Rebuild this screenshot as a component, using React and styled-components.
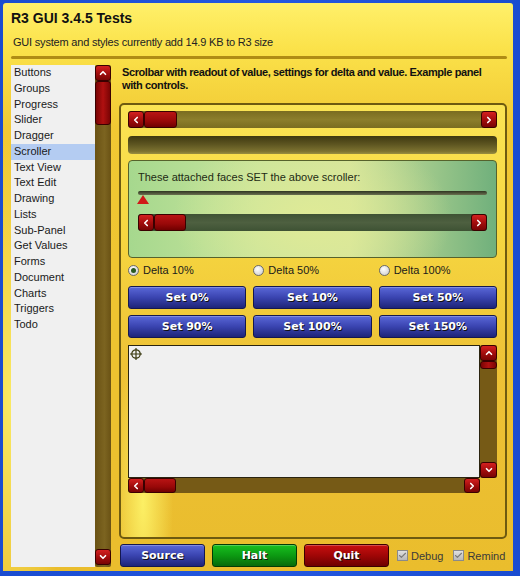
import styled, { createGlobalStyle } from "styled-components";
import { ChevronLeft, ChevronRight, ChevronUp, ChevronDown, Check } from "lucide-react";

const Global = createGlobalStyle`
  html, body { margin: 0; padding: 0; background: #1040c0; }
  body { font-family: "Liberation Sans", Arial, sans-serif; }
  * { box-sizing: border-box; }
`;

/* ─── frame ─── */
const Frame = styled.div`
  width: 520px;
  height: 576px;
  padding: 3px 7px 5px 3px;
  background: linear-gradient(90deg, #1a4cd0, #2458e0 50%, #1a4cd0);
`;

const Window = styled.div`
  height: 100%;
  display: flex;
  flex-direction: column;
  padding: 6px 6px 4px 8px;
  border-radius: 3px 3px 0 0;
  background:
    radial-gradient(ellipse 60px 260px at 8px 70%, rgba(255, 250, 120, 0.7), transparent),
    linear-gradient(180deg, #fff06a 0%, #fbe24a 8%, #f1c833 22%, #eabd2d 100%);
`;

/* ─── header ─── */
const Title = styled.h1`
  margin: 0;
  font-size: 14px;
  line-height: 18px;
  font-weight: 700;
  color: #111;
`;

const Subtitle = styled.div`
  margin-top: 8px;
  padding-left: 2px;
  font-size: 11px;
  line-height: 14px;
  letter-spacing: -0.2px;
  color: #222;
`;

const Divider = styled.div`
  margin-top: 7px;
  height: 3px;
  border-radius: 2px;
  background: #b08c14;
`;

const Body = styled.div`
  flex: 1;
  margin-top: 6px;
  display: flex;
  gap: 8px;
  min-height: 0;
`;

/* ─── sidebar ─── */
const Sidebar = styled.div`
  display: flex;
  width: 100px;
`;

const List = styled.ul`
  margin: 0;
  padding: 0;
  list-style: none;
  flex: 1;
  background: #f0f0f0;
`;

const Item = styled.li`
  height: 15.75px;
  line-height: 15.75px;
  padding-left: 3px;
  font-size: 11px;
  color: #1a1a1a;
  background: ${(p) => (p.$active ? "#b4ccf2" : "transparent")};
`;

/* ─── scrollbars ─── */
const VBar = styled.div`
  display: flex;
  flex-direction: column;
  width: ${(p) => p.$w || 16}px;
  background: ${(p) => p.$track || "linear-gradient(90deg, #6a5214, #7c6420 60%, #6a5214)"};
  border-radius: 2px;
`;

const HBar = styled.div`
  display: flex;
  height: ${(p) => p.$h || 17}px;
  background: ${(p) => p.$track};
  border-radius: 3px;
`;

const Arrow = styled.div`
  flex: none;
  width: ${(p) => p.$w || 16}px;
  height: ${(p) => p.$h || 16}px;
  display: flex;
  align-items: center;
  justify-content: center;
  border: 1px solid #3a0000;
  border-radius: 3px;
  background: linear-gradient(180deg, #d42020 0%, #a00c0c 55%, #780404 100%);
  color: #fff;
`;

const Thumb = styled.div`
  flex: none;
  width: ${(p) => p.$w}px;
  height: ${(p) => p.$h}px;
  border: 1px solid #3a0000;
  border-radius: 3px;
  background: ${(p) =>
    p.$vertical
      ? "linear-gradient(90deg, #7a0404, #b01010 50%, #7a0404)"
      : "linear-gradient(180deg, #b81414 0%, #980808 60%, #700000 100%)"};
`;

const Spacer = styled.div`
  flex: 1;
`;

const ic = { size: 10, strokeWidth: 4 };

/* ─── main ─── */
const Main = styled.div`
  flex: 1;
  display: flex;
  flex-direction: column;
`;

const Description = styled.p`
  margin: 1px 0 0;
  padding: 0 20px 0 3px;
  font-size: 11px;
  line-height: 13px;
  font-weight: 700;
  letter-spacing: -0.4px;
  color: #111;
`;

const Group = styled.div`
  flex: 1;
  margin-top: 11px;
  display: flex;
  flex-direction: column;
  padding: 6px 8px 0 7px;
  border: 2px solid #6e5a10;
  border-radius: 5px;
  background:
    radial-gradient(ellipse 30px 160px at 22px 92%, rgba(255, 248, 110, 0.85), transparent),
    linear-gradient(180deg, #fbe454 0%, #f6d640 30%, #eec236 60%, #eabd2e 100%);
`;

const Readout = styled.div`
  margin-top: 8px;
  height: 18px;
  border-radius: 4px;
  background: linear-gradient(180deg, #3e3810 0%, #5c5420 45%, #7c7230 85%, #9a8e40 100%);
`;

const GreenPanel = styled.div`
  margin-top: 6px;
  height: 98px;
  padding: 9px 9px 0 9px;
  border: 1px solid #56622c;
  border-radius: 4px;
  background:
    radial-gradient(ellipse 140px 90px at 50% 60%, rgba(225, 235, 150, 0.9), transparent),
    linear-gradient(90deg, #a6d88e 0%, #c8e49c 35%, #d4e49c 60%, #70b07c 100%);
`;

const PanelText = styled.div`
  font-size: 11px;
  line-height: 14px;
  color: #1e2a14;
`;

const SliderTrack = styled.div`
  position: relative;
  margin-top: 7px;
  height: 4px;
  border-radius: 2px;
  background: linear-gradient(180deg, #2e3420, #6a7050);
`;

const Marker = styled.div`
  position: absolute;
  left: -1px;
  top: 4px;
  width: 0;
  height: 0;
  border-left: 6px solid transparent;
  border-right: 6px solid transparent;
  border-bottom: 9px solid #d01818;
`;

const PanelScroller = styled.div`
  margin-top: 19px;
`;

const Radios = styled.div`
  margin-top: 5px;
  display: grid;
  grid-template-columns: repeat(3, 1fr);
  gap: 7px;
  height: 14px;
`;

const Radio = styled.label`
  display: flex;
  align-items: center;
  gap: 4px;
  font-size: 11px;
  color: #1a1a1a;
`;

const RadioDot = styled.span`
  width: 11px;
  height: 11px;
  border-radius: 50%;
  border: 1px solid #6a6a6a;
  background: radial-gradient(circle at 40% 35%, #ffffff, #c8c8c8);
  display: flex;
  align-items: center;
  justify-content: center;

  &::after {
    content: "";
    width: 5px;
    height: 5px;
    border-radius: 50%;
    background: ${(p) => (p.$on ? "#2a5a20" : "transparent")};
  }
`;

const ButtonGrid = styled.div`
  margin-top: 9px;
  display: grid;
  grid-template-columns: repeat(3, 1fr);
  gap: 6px 7px;
`;

const palette = {
  blue: ["#5a68d8", "#3a44b0", "#1e2478", "#141850"],
  green: ["#18c020", "#0c9a12", "#066a0a", "#033c05"],
  red: ["#c81010", "#a00606", "#6e0000", "#3c0000"],
};

const Button = styled.button`
  height: 23px;
  padding: 0;
  border: 1px solid ${(p) => palette[p.$tone || "blue"][3]};
  border-radius: 3px;
  background: linear-gradient(
    180deg,
    ${(p) => palette[p.$tone || "blue"][0]} 0%,
    ${(p) => palette[p.$tone || "blue"][1]} 50%,
    ${(p) => palette[p.$tone || "blue"][2]} 100%
  );
  font-family: "DejaVu Sans", "Liberation Sans", sans-serif;
  font-size: 11px;
  font-weight: 700;
  color: #fff;
  text-shadow: 1px 1px 0 #101010;
  box-shadow: inset 0 1px 0 rgba(255, 255, 255, 0.25);
`;

const Editor = styled.div`
  margin-top: 7px;
  display: grid;
  grid-template-columns: 1fr 17px;
  grid-template-rows: 133px 15px;
`;

const TextArea = styled.div`
  position: relative;
  background: #f0f0f0;
  border: 1px solid #2a2410;
`;

const Cross = styled.svg`
  position: absolute;
  left: 1px;
  top: 2px;
`;

/* ─── footer ─── */
const Footer = styled.div`
  margin-top: 5px;
  display: flex;
  align-items: center;
  gap: 7px;
  padding-left: 1px;
`;

const FootButton = styled(Button)`
  width: 85px;
`;

const CheckLabel = styled.label`
  display: flex;
  align-items: center;
  gap: 3px;
  margin-left: ${(p) => p.$ml || 0}px;
  font-size: 11px;
  color: #3a3a3a;
`;

const Box = styled.span`
  width: 11px;
  height: 11px;
  border: 1px solid #8a8a8a;
  background: linear-gradient(180deg, #e0e0e0, #b8b8b8);
  display: flex;
  align-items: center;
  justify-content: center;
  color: #7a7a7a;
`;

const items = [
  "Buttons", "Groups", "Progress", "Slider", "Dragger", "Scroller", "Text View",
  "Text Edit", "Drawing", "Lists", "Sub-Panel", "Get Values", "Forms", "Document",
  "Charts", "Triggers", "Todo",
];

const Scroller = ({ track, thumbW = 33 }) => (
  <HBar $track={track}>
    <Arrow $h={17}><ChevronLeft {...ic} /></Arrow>
    <Thumb $w={thumbW} $h={17} />
    <Spacer />
    <Arrow $h={17}><ChevronRight {...ic} /></Arrow>
  </HBar>
);

export default function App() {
  return (
    <>
      <Global />
      <Frame>
        <Window>
          <Title>R3 GUI 3.4.5 Tests</Title>
          <Subtitle>GUI system and styles currently add 14.9 KB to R3 size</Subtitle>
          <Divider />
          <Body>
            <Sidebar>
              <List>
                {items.map((t) => (
                  <Item key={t} $active={t === "Scroller"}>{t}</Item>
                ))}
              </List>
              <VBar>
                <Arrow><ChevronUp {...ic} /></Arrow>
                <Thumb $vertical $w={16} $h={44} />
                <Spacer />
                <Arrow><ChevronDown {...ic} /></Arrow>
                <div style={{ height: 2 }} />
              </VBar>
            </Sidebar>
            <Main>
              <Description>
                Scrolbar with readout of value, settings for delta and value. Example panel
                with controls.
              </Description>
              <Group>
                <Scroller track="linear-gradient(180deg, #7a6c20, #8c7e2c 50%, #7a6c20)" />
                <Readout />
                <GreenPanel>
                  <PanelText>These attached faces SET the above scroller:</PanelText>
                  <SliderTrack>
                    <Marker />
                  </SliderTrack>
                  <PanelScroller>
                    <Scroller track="linear-gradient(180deg, #3e5234, #4e6040 50%, #3e5234)" thumbW={32} />
                  </PanelScroller>
                </GreenPanel>
                <Radios>
                  <Radio><RadioDot $on />Delta 10%</Radio>
                  <Radio><RadioDot />Delta 50%</Radio>
                  <Radio><RadioDot />Delta 100%</Radio>
                </Radios>
                <ButtonGrid>
                  {["Set 0%", "Set 10%", "Set 50%", "Set 90%", "Set 100%", "Set 150%"].map((t) => (
                    <Button key={t}>{t}</Button>
                  ))}
                </ButtonGrid>
                <Editor>
                  <TextArea>
                    <Cross width="12" height="12" viewBox="0 0 12 12">
                      <circle cx="6" cy="6" r="4.2" fill="none" stroke="#3a3a10" strokeWidth="1.3" />
                      <path d="M6 0v12M0 6h12" stroke="#3a3a10" strokeWidth="1.2" />
                    </Cross>
                  </TextArea>
                  <VBar $w={17} $track="#765a16">
                    <Arrow $w={17}><ChevronUp {...ic} /></Arrow>
                    <Thumb $vertical $w={17} $h={8} />
                    <Spacer />
                    <Arrow $w={17}><ChevronDown {...ic} /></Arrow>
                  </VBar>
                  <HBar $h={15} $track="#765a16">
                    <Arrow $h={15}><ChevronLeft {...ic} /></Arrow>
                    <Thumb $w={32} $h={15} />
                    <Spacer />
                    <Arrow $h={15}><ChevronRight {...ic} /></Arrow>
                  </HBar>
                </Editor>
              </Group>
              <Footer>
                <FootButton>Source</FootButton>
                <FootButton $tone="green">Halt</FootButton>
                <FootButton $tone="red">Quit</FootButton>
                <CheckLabel $ml={1}>
                  <Box><Check size={9} strokeWidth={3} /></Box>Debug
                </CheckLabel>
                <CheckLabel $ml={3}>
                  <Box><Check size={9} strokeWidth={3} /></Box>Remind
                </CheckLabel>
              </Footer>
            </Main>
          </Body>
        </Window>
      </Frame>
    </>
  );
}
